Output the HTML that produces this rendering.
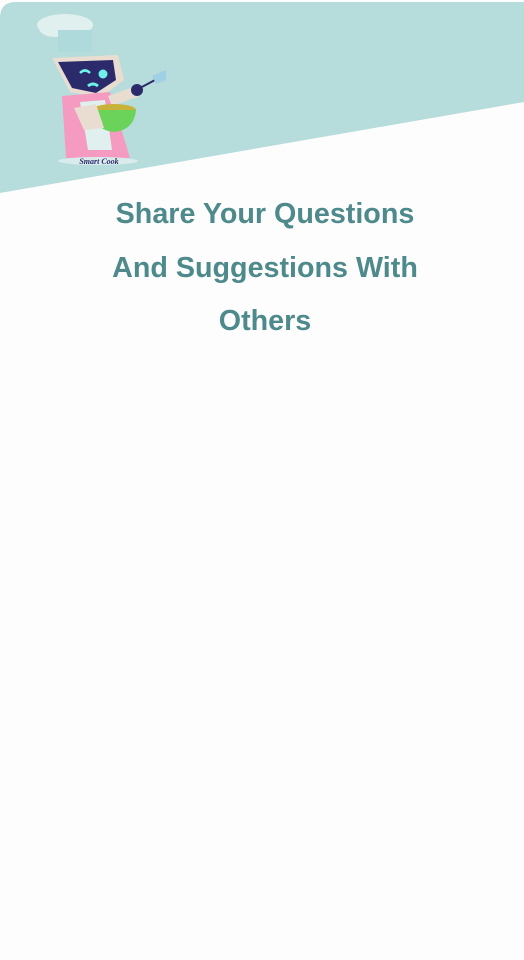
<!DOCTYPE html>
<html><head><meta charset="utf-8"><style>
html,body{margin:0;padding:0;width:524px;height:960px;background:#fdfdfd;overflow:hidden;font-family:"Liberation Sans",sans-serif}
svg.bg{position:absolute;left:0;top:0}
h1{position:absolute;left:0;width:530px;top:188px;margin:0;text-align:center;color:#4e8a8b;font-size:28.7px;font-weight:bold;line-height:53.5px}
</style></head><body>
<svg class="bg" width="524" height="960">
<path d="M0,18 Q0,2 16,2 L524,2 L524,102 L0,193 Z" fill="#b7dcdc"/>
<ellipse cx="65" cy="25" rx="28" ry="11" fill="#dff0ef"/>
<ellipse cx="55" cy="28" rx="16" ry="9" fill="#dff0ef"/>
<rect x="58" y="30" width="34" height="22" fill="#aedadb"/>
<path d="M52,58 L118,55 L124,80 L100,98 L70,92 Z" fill="#e8ddd0"/>
<path d="M58,62 L113,60 L116,80 L96,93 L72,88 Z" fill="#2b2b6b"/>
<path d="M80,73 q5,-5 10,0" stroke="#6df1e8" stroke-width="2.5" fill="none"/>
<circle cx="103" cy="74" r="4.5" fill="#6df1e8"/>
<path d="M88,86 q5,-4 10,0" stroke="#6df1e8" stroke-width="3" fill="none"/>
<path d="M62,96 L110,92 L130,158 L66,158 Z" fill="#f59ac0"/>
<path d="M80,102 L105,100 L112,150 L88,150 Z" fill="#dff0ef"/>
<path d="M108,96 L136,86 L140,96 L112,106 Z" fill="#e8ddd0"/>
<circle cx="137" cy="90" r="6" fill="#2b2b6b"/>
<line x1="140" y1="88" x2="155" y2="80" stroke="#2b2b6b" stroke-width="2"/>
<path d="M152,76 L166,70 L166,80 L156,84 Z" fill="#9fd0e6"/>
<ellipse cx="114" cy="110" rx="22" ry="6" fill="#c8b23a"/>
<path d="M92,110 Q94,130 114,132 Q134,130 136,110 Z" fill="#6cd35a"/>
<path d="M74,108 L96,104 L104,128 L84,130 Z" fill="#e8ddd0"/>
<ellipse cx="98" cy="161" rx="40" ry="4" fill="#d9ebeb"/>
<text x="99" y="164" font-size="8" font-weight="bold" font-style="italic" fill="#2b2b6b" text-anchor="middle" font-family="Liberation Serif,serif">Smart Cook</text>
</svg>
<h1>Share Your Questions<br>And Suggestions With<br>Others</h1>
</body></html>
